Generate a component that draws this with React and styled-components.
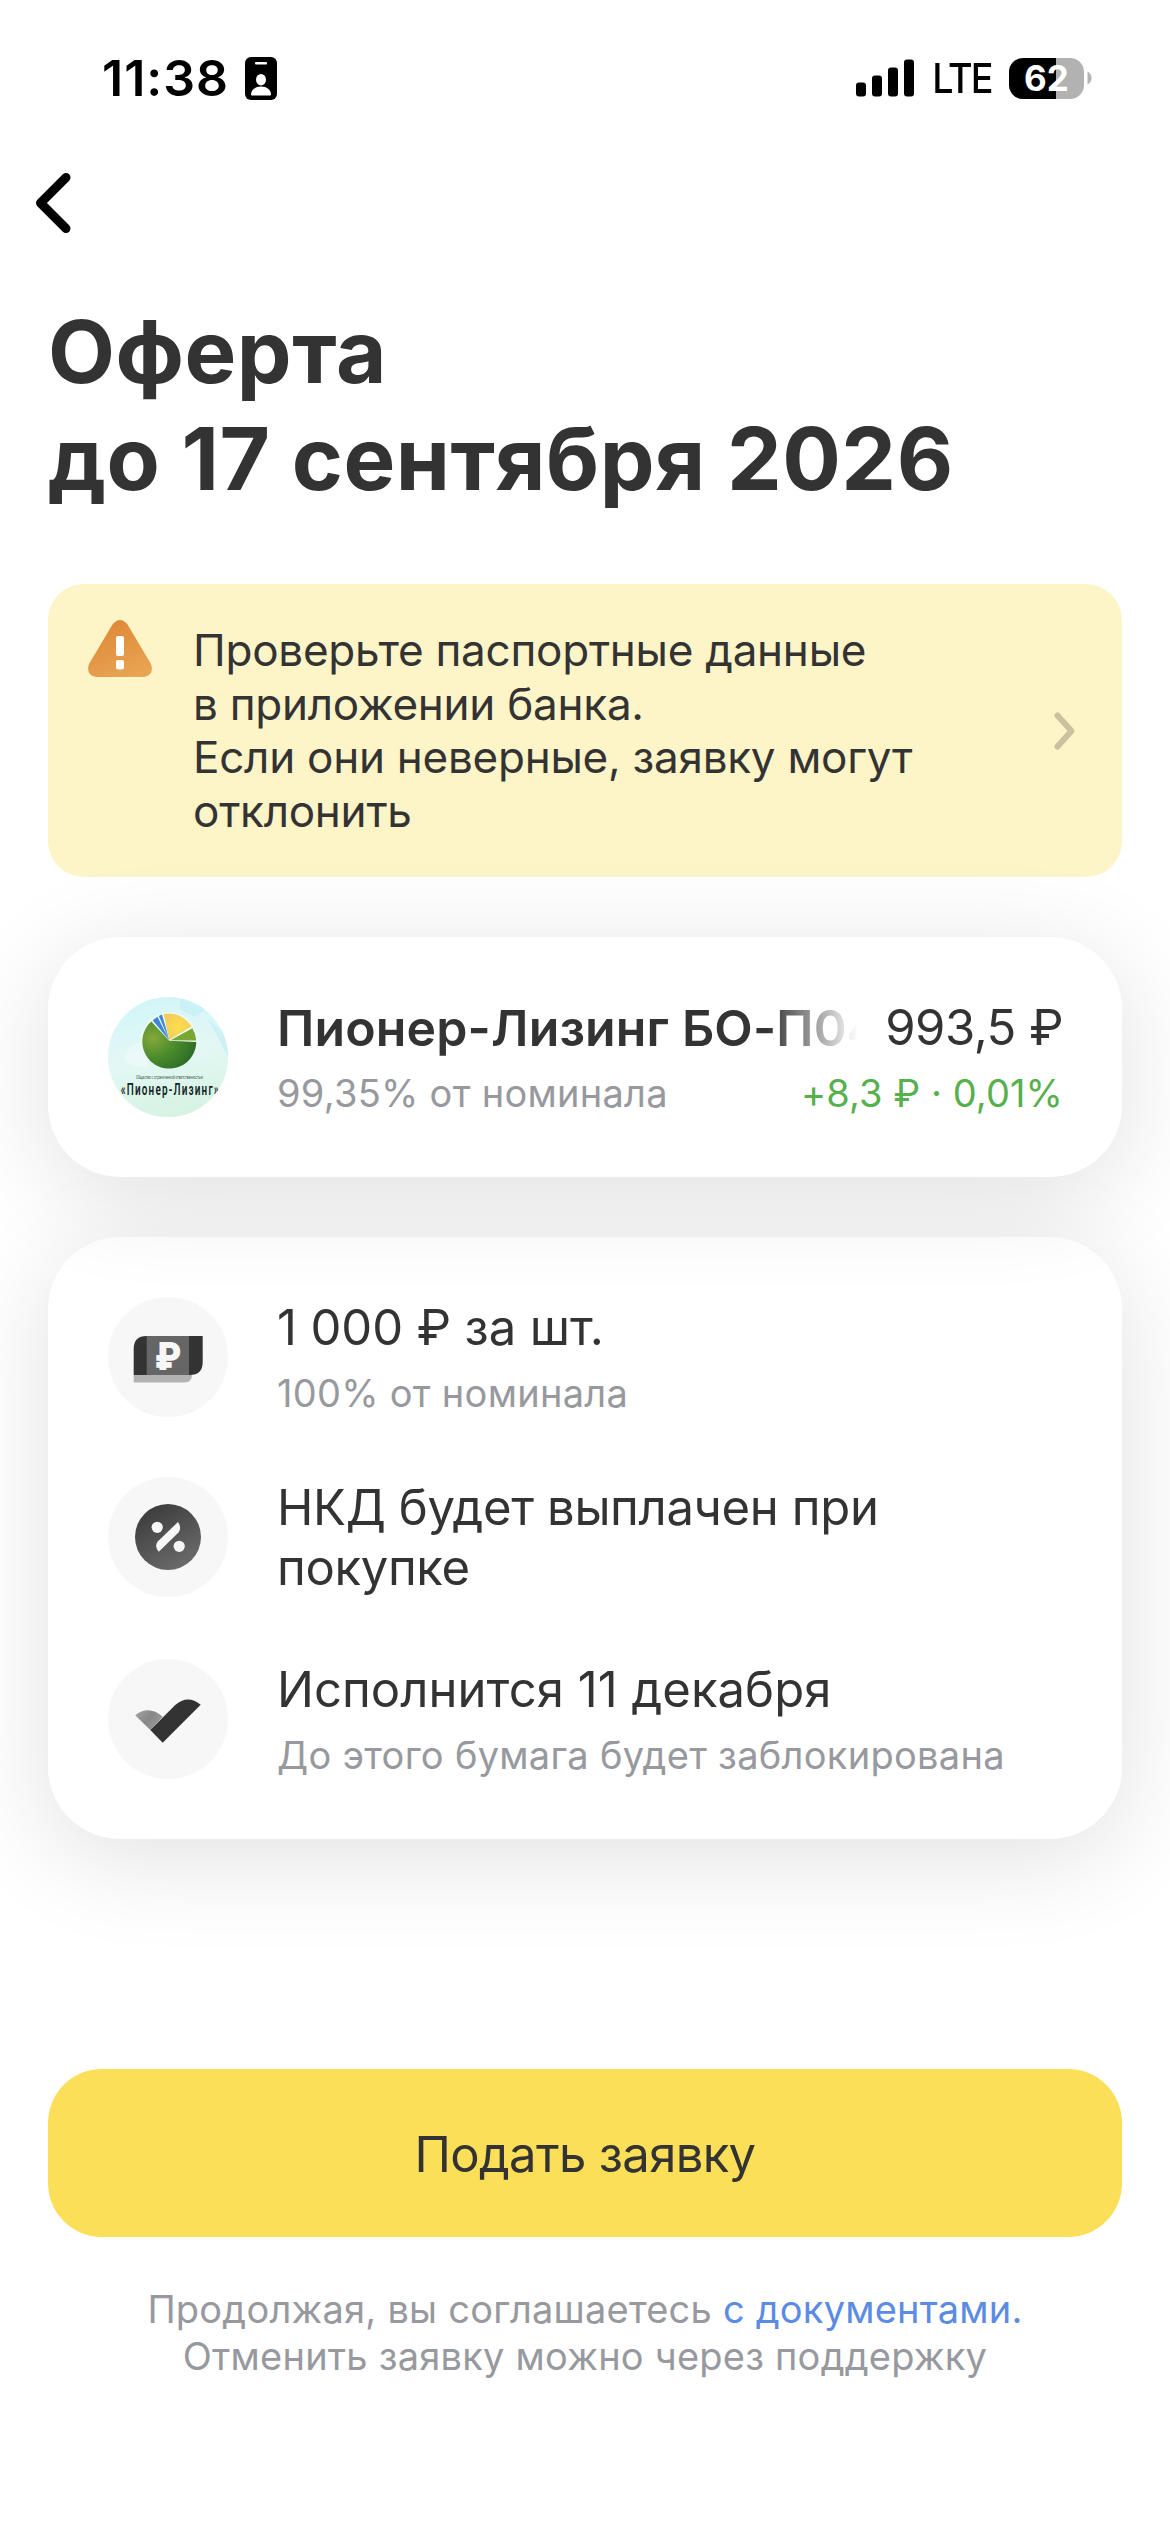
import React from 'react';
import styled, { createGlobalStyle } from 'styled-components';

const GlobalStyle = createGlobalStyle`
    body {
        margin: 0;
        background: #ffffff;
        font-family: Inter, "Liberation Sans", sans-serif;
        color: #333333;
    }
    * {
        box-sizing: border-box;
    }
`;

const Screen = styled.div`
    width: 1170px;
    height: 2532px;
    display: flex;
    flex-direction: column;
    overflow: hidden;
    background: #ffffff;
`;

const StatusBar = styled.div`
    height: 156px;
    padding: 0 77px 0 102px;
    display: flex;
    align-items: center;
    justify-content: space-between;
    color: #000000;
`;

const StatusGroup = styled.div`
    display: flex;
    align-items: center;
`;

const Time = styled.div`
    font-size: 50px;
    line-height: 60px;
    font-weight: 600;
    letter-spacing: 1px;
    width: 143px;
    white-space: nowrap;
`;

const Network = styled.div`
    margin-left: 15px;
    font-size: 41px;
    line-height: 50px;
    font-weight: 500;
    letter-spacing: -2.2px;
    width: 80px;
    padding-left: 1px;
    white-space: nowrap;
    transform: scaleX(0.92);
    transform-origin: 30px 50%;
`;

const Battery = styled.div`
    width: 75px;
    height: 41px;
    border-radius: 14px;
    background: linear-gradient(to right, #000000 47px, #b2b2b2 47px);
    color: #ffffff;
    font-size: 35px;
    line-height: 41px;
    font-weight: 700;
    text-align: center;
`;

const NavBar = styled.div`
    height: 142px;
    padding: 15px 0 0 32px;
`;

const BackButton = styled.button`
    display: block;
    padding: 0;
    border: none;
    background: none;
    line-height: 0;
`;

const Title = styled.h1`
    margin: 0;
    padding-left: 48px;
    font-size: 87px;
    line-height: 107px;
    font-weight: 700;
    letter-spacing: 0.5px;
    white-space: nowrap;
`;

const Banner = styled.div`
    margin: 72px 48px 0;
    height: 293px;
    padding: 40px 45px 0 40px;
    display: flex;
    border-radius: 36px;
    background: #fdf4c7;
`;

const BannerIcon = styled.div`
    width: 105px;
    margin-top: -4px;
`;

const BannerText = styled.div`
    flex: 1;
    font-size: 44px;
    line-height: 53.5px;
    letter-spacing: -0.25px;
    white-space: nowrap;
`;

const BannerArrow = styled.div`
    height: 213px;
    display: flex;
    align-items: center;
`;

const Card = styled.div`
    position: relative;
    z-index: ${({ $level }) => $level};
    margin: 60px 48px 0;
    padding: 60px;
    display: flex;
    flex-direction: column;
    gap: 60px;
    border-radius: 72px;
    background: #ffffff;
    box-shadow: 0 18px 102px rgba(0, 0, 0, 0.12);
`;

const Row = styled.div`
    min-height: 120px;
    display: flex;
    align-items: flex-start;
`;

const RowIcon = styled.div`
    width: 120px;
    height: 120px;
    margin-right: 49px;
    flex-shrink: 0;
    border-radius: 50%;
    overflow: hidden;
    background: #f7f7f7;
`;

const RowBody = styled.div`
    flex: 1;
    min-width: 0;
    margin-right: -1px;
    padding: 1px 0;
`;

const Line = styled.div`
    display: flex;
    justify-content: space-between;
`;

const Primary = styled.div`
    font-size: 49px;
    line-height: 60px;
    letter-spacing: ${({ $tracking = 0 }) => $tracking}px;
    white-space: nowrap;
`;

const Name = styled(Primary)`
    width: 581px;
    overflow: hidden;
    font-size: 50px;
    font-weight: 600;
    mask-image: linear-gradient(to right, #000 490px, transparent 581px);
`;

const Secondary = styled.div`
    margin-top: 12px;
    font-size: 38px;
    line-height: 46px;
    letter-spacing: 0.28px;
    color: #97999e;
    white-space: nowrap;
`;

const Change = styled(Secondary)`
    letter-spacing: 0.1px;
    color: #56b04c;
`;

const SubmitButton = styled.button`
    margin: 230px 48px 0;
    height: 168px;
    flex-shrink: 0;
    padding: 2px 0 0;
    border: none;
    border-radius: 54px;
    background: #fbdf58;
    color: #333333;
    font-family: inherit;
    font-size: 49px;
    letter-spacing: -0.65px;
`;

const Legal = styled.div`
    margin-top: 49px;
    font-size: 38px;
    line-height: 47px;
    letter-spacing: 0.22px;
    text-align: center;
    color: #97999e;
    white-space: nowrap;
`;

const LegalLink = styled.span`
    color: #5c8be3;
`;

const IdBadgeIcon = () => (
    <svg width="32" height="43" viewBox="0 0 32 43">
        <rect width="32" height="43" rx="6" fill="#000" />
        <rect x="10" y="5" width="12" height="2.6" rx="1" fill="#fff" />
        <ellipse cx="16" cy="22.7" rx="5" ry="5.8" fill="#fff" />
        <path d="M6 37.6c0-4.8 4.4-8 10-8s10 3.200 10 8q0 1-1 1H7q-1 0-1-1z" fill="#fff" />
    </svg>
);

const SignalIcon = () => (
    <svg width="58" height="38" viewBox="0 0 58 38">
        <rect x="0" y="23.500" width="10" height="14" rx="3" />
        <rect x="16" y="16.500" width="10" height="21" rx="3" />
        <rect x="32" y="8.500" width="10" height="29" rx="3" />
        <rect x="48" y="0.500" width="10" height="37" rx="3" />
    </svg>
);

const BatteryTip = () => (
    <svg width="9" height="14" viewBox="0 0 9 14">
        <path d="M3.500 0.500Q7.500 3 7.500 7T3.500 13.500z" fill="#b2b2b2" />
    </svg>
);

const BackIcon = () => (
    <svg width="44" height="64" viewBox="0 0 44 64">
        <path d="M34 6.500L8.500 32L34 57.500" fill="none" stroke="#000" strokeWidth="9" strokeLinecap="round" strokeLinejoin="round" />
    </svg>
);

const WarningIcon = () => (
    <svg width="64" height="58" viewBox="0 0 64 58">
        <defs>
            <linearGradient id="warning" x1="0.3" y1="0" x2="0.7" y2="1">
                <stop offset="0" stopColor="#de8736" />
                <stop offset="1" stopColor="#e8a553" />
            </linearGradient>
        </defs>
        <path d="M24.500 4.500Q32 -4.500 39.500 4.500L63 44Q66.500 55 56 57H8Q-2.500 55 1 44z" fill="url(#warning)" />
        <rect x="28" y="16" width="8" height="20" rx="2" fill="#fff" />
        <rect x="28" y="40" width="8" height="9.500" rx="2" fill="#fff" />
    </svg>
);

const ChevronIcon = () => (
    <svg width="24" height="40" viewBox="0 0 24 40">
        <path d="M4.500 4.500L18.500 20L4.500 35.500" fill="none" stroke="#cac29f" strokeWidth="6" strokeLinecap="round" strokeLinejoin="round" />
    </svg>
);

const CompanyLogo = () => (
    <svg width="120" height="120" viewBox="0 0 120 120">
        <defs>
            <linearGradient id="sky" x1="0.3" y1="0" x2="0.5" y2="1">
                <stop offset="0" stopColor="#d2f5f8" />
                <stop offset="0.5" stopColor="#e3f8f5" />
                <stop offset="1" stopColor="#d6f3e2" />
            </linearGradient>
            <radialGradient id="pie" cx="0.2" cy="0.35" r="0.85">
                <stop offset="0" stopColor="#83a93b" />
                <stop offset="0.5" stopColor="#4a8b2c" />
                <stop offset="1" stopColor="#2b6a25" />
            </radialGradient>
            <radialGradient id="sun">
                <stop offset="0" stopColor="#fbe04c" />
                <stop offset="1" stopColor="#f3cd5c" />
            </radialGradient>
        </defs>
        <rect width="120" height="120" fill="url(#sky)" />
        <path d="M72 0l26 12-12 8-14-8zM100 22l20 18v20z" fill="#c3f0f7" opacity="0.7" />
        <path d="M16 62q4-14 16-16-2-12 8-18v42q-16 2-24-8z" fill="#ffffff" opacity="0.3" />
        <circle cx="61.3" cy="43.3" r="28" fill="#effaf2" />
        <path d="M61.300 43.800L88.300 45A27 27 0 1 1 43.300 24.500z" fill="url(#pie)" />
        <path d="M61.300 43.300L44.600 23.300L49.500 19.800z" fill="#3f87d6" />
        <path d="M61.300 43.300L50.800 18.900L54 17.500z" fill="#3f87d6" />
        <path d="M61.300 42.800L55.600 16.900A27 27 0 0 1 83.500 29.500z" fill="url(#sun)" />
        <path d="M62.500 43.200L84.400 31.200A27 27 0 0 1 88.300 43.600z" fill="#78a733" />
        <text x="28" y="82" fontSize="4.600" fontFamily="Roboto, sans-serif" fill="#3d5a50" textLength="67" lengthAdjust="spacingAndGlyphs">
            Общество с ограниченной ответственностью
        </text>
        <text x="20.500" y="98.300" transform="scale(0.62 1)" fontSize="16" fontWeight="600" fontFamily="Roboto, sans-serif" fill="#12261f" textLength="158" lengthAdjust="spacing">
            «Пионер-Лизинг»
        </text>
    </svg>
);

const BanknoteIcon = () => (
    <svg width="120" height="120" viewBox="0 0 120 120">
        <path d="M25.700 78H84V78Q84 85.500 76 85.500H25.700z" fill="#b2b2b2" />
        <path d="M38.700 39H94.700V65Q94.700 78 81.700 78H25.700V52Q25.700 39 38.700 39z" fill="#333" />
        <rect x="38.700" y="39" width="42.300" height="39" fill="#666" />
        <text x="46.500" y="72.500" fontSize="38" fontWeight="900" fill="#f7f7f7" textLength="26.500" lengthAdjust="spacingAndGlyphs">₽</text>
    </svg>
);

const PercentIcon = () => (
    <svg width="120" height="120" viewBox="0 0 120 120">
        <defs>
            <linearGradient id="percent" x1="0.2" y1="0" x2="0.8" y2="1">
                <stop offset="0" stopColor="#3a3a3a" />
                <stop offset="1" stopColor="#6e6e6e" />
            </linearGradient>
        </defs>
        <circle cx="60" cy="60" r="33" fill="url(#percent)" />
        <circle cx="49.200" cy="50.300" r="5.600" fill="#f7f7f7" />
        <circle cx="71.200" cy="69.300" r="5.600" fill="#f7f7f7" />
        <path d="M70 45Q74 51 70.500 55.500L50.800 74.800Q45.800 69 50 64.300z" fill="#f7f7f7" />
    </svg>
);

const CheckIcon = () => (
    <svg width="120" height="120" viewBox="0 0 120 120">
        <defs>
            <linearGradient id="check" x1="0" y1="0.2" x2="0.9" y2="0.7">
                <stop offset="0" stopColor="#a0a0a0" />
                <stop offset="0.5" stopColor="#888" />
                <stop offset="1" stopColor="#999" />
            </linearGradient>
        </defs>
        <path d="M27.200 56.300Q40.500 45.500 54.700 57.700L42.300 71z" fill="url(#check)" />
        <path d="M42.300 71L67 46.300Q79.500 35 92.700 45.700L54.700 83.700z" fill="#333" />
    </svg>
);

const terms = [
    { icon: <BanknoteIcon />, primary: ['1 000 ₽ за шт.'], tracking: -0.1, secondary: '100% от номинала' },
    { icon: <PercentIcon />, primary: ['НКД будет выплачен при', 'покупке'], tracking: -0.35 },
    { icon: <CheckIcon />, primary: ['Исполнится 11 декабря'], tracking: 0.05, secondary: 'До этого бумага будет заблокирована' },
];

const TermRow = ({ icon, primary, tracking, secondary }) => (
    <Row>
        <RowIcon>{icon}</RowIcon>
        <RowBody>
            {primary.map((line) => <Primary key={line} $tracking={tracking}>{line}</Primary>)}
            {secondary && <Secondary>{secondary}</Secondary>}
        </RowBody>
    </Row>
);

const App = () => {
    return (
        <Screen>
            <GlobalStyle />
            <StatusBar>
                <StatusGroup>
                    <Time>11:38</Time>
                    <IdBadgeIcon />
                </StatusGroup>
                <StatusGroup>
                    <SignalIcon />
                    <Network>LTE</Network>
                    <Battery>62</Battery>
                    <BatteryTip />
                </StatusGroup>
            </StatusBar>
            <NavBar>
                <BackButton>
                    <BackIcon />
                </BackButton>
            </NavBar>
            <Title>
                Оферта<br />
                до 17 сентября 2026
            </Title>
            <Banner>
                <BannerIcon>
                    <WarningIcon />
                </BannerIcon>
                <BannerText>
                    Проверьте паспортные данные<br />
                    в приложении банка.<br />
                    Если они неверные, заявку могут<br />
                    отклонить
                </BannerText>
                <BannerArrow>
                    <ChevronIcon />
                </BannerArrow>
            </Banner>
            <Card $level={2}>
                <Row>
                    <RowIcon>
                        <CompanyLogo />
                    </RowIcon>
                    <RowBody>
                        <Line>
                            <Name $tracking={0.15}>Пионер-Лизинг БО-П04</Name>
                            <Primary $tracking={-0.5}>993,5 ₽</Primary>
                        </Line>
                        <Line>
                            <Secondary>99,35% от номинала</Secondary>
                            <Change>+8,3 ₽ · 0,01%</Change>
                        </Line>
                    </RowBody>
                </Row>
            </Card>
            <Card $level={1}>
                {terms.map((term) => <TermRow key={term.primary[0]} {...term} />)}
            </Card>
            <SubmitButton>Подать заявку</SubmitButton>
            <Legal>
                Продолжая, вы соглашаетесь <LegalLink>с документами.</LegalLink><br />
                Отменить заявку можно через поддержку
            </Legal>
        </Screen>
    );
};

export default App;
